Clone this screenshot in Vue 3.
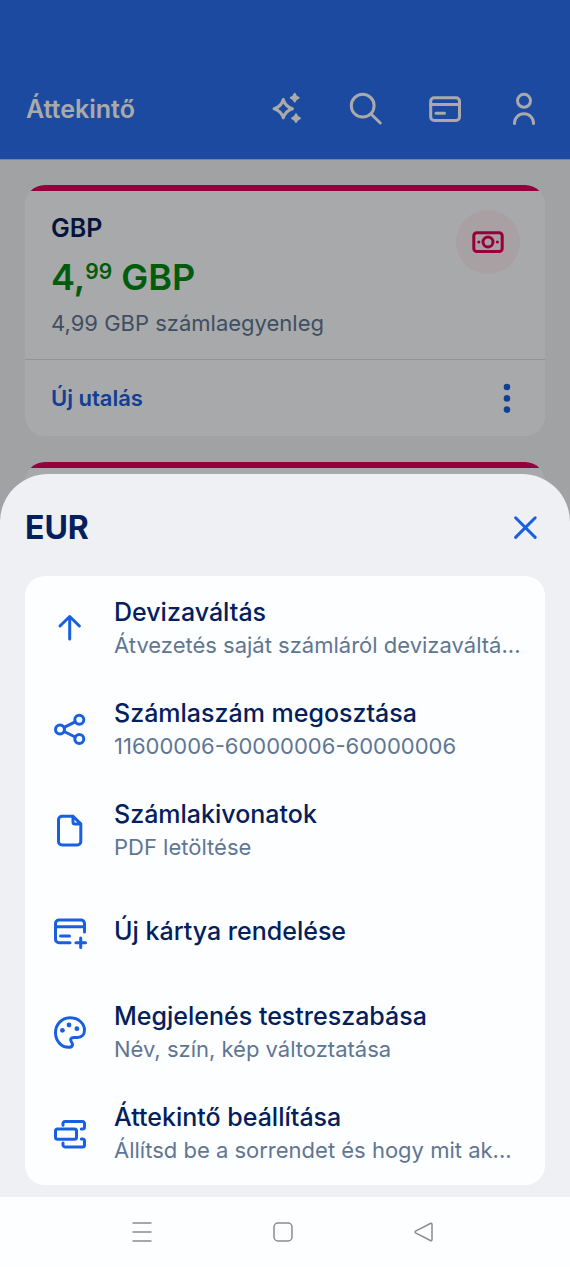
<script setup>
const menu = [
  { icon: 'arrow', title: 'Devizaváltás', note: 'Átvezetés saját számláról devizaváltá...' },
  { icon: 'share', title: 'Számlaszám megosztása', note: '11600006-60000006-60000006' },
  { icon: 'file', title: 'Számlakivonatok', note: 'PDF letöltése' },
  { icon: 'newcard', title: 'Új kártya rendelése', note: '' },
  { icon: 'palette', title: 'Megjelenés testreszabása', note: 'Név, szín, kép változtatása' },
  { icon: 'order', title: 'Áttekintő beállítása', note: 'Állítsd be a sorrendet és hogy mit ak...' },
]
</script>

<template>
  <div class="screen">
    <div class="overview">
      <header class="topbar">
        <h1>Áttekintő</h1>
        <button class="icon-btn" aria-label="Újdonságok">
          <svg class="icon" viewBox="0 0 40 40">
            <path d="M16.3 10.5C17.8 15.6 20.3 18.2 25.5 19.7C20.3 21.2 17.8 23.8 16.3 28.9C14.8 23.8 12.3 21.2 7.1 19.7C12.3 18.2 14.8 15.6 16.3 10.5Z" />
            <path class="solid" d="M27.7 4.8C28.3 7 29.4 8.1 31.6 8.7C29.4 9.3 28.3 10.4 27.7 12.6C27.1 10.4 26 9.3 23.8 8.7C26 8.1 27.1 7 27.7 4.8ZM29 25.3C29.6 27.5 30.7 28.6 32.9 29.2C30.7 29.8 29.6 30.9 29 33.1C28.4 30.9 27.3 29.8 25.1 29.2C27.3 28.6 28.4 27.5 29 25.3Z" />
          </svg>
        </button>
        <button class="icon-btn" aria-label="Keresés">
          <svg class="icon" viewBox="0 0 40 40"><circle cx="16.7" cy="16.7" r="11.4" /><path d="M25 25L34.3 34" /></svg>
        </button>
        <button class="icon-btn" aria-label="Kártyák">
          <svg class="icon" viewBox="0 0 40 40"><rect x="5.7" y="8.7" width="28.8" height="22.8" rx="3.5" /><path d="M5.5 15.4H34.5M11 24.3H19.5" /></svg>
        </button>
        <button class="icon-btn" aria-label="Profil">
          <svg class="icon" viewBox="0 0 40 40"><circle cx="20" cy="11.8" r="6.5" /><path d="M10.5 34.5V34.2A9.5 9.5 0 0 1 29.5 34.2V34.5" /></svg>
        </button>
      </header>

      <main class="accounts">
        <section class="account">
          <div class="account-body">
            <div>
              <h2>GBP</h2>
              <p class="amount">4,<span class="cents">99</span> GBP</p>
              <p class="balance">4,99 GBP számlaegyenleg</p>
            </div>
            <div class="badge">
              <svg class="icon" viewBox="0 0 40 40">
                <rect x="5.8" y="10.7" width="28.4" height="18.8" rx="3" /><circle cx="20" cy="20" r="5" />
                <circle class="dot" cx="10.8" cy="20" r="1.6" /><circle class="dot" cx="29.4" cy="20" r="1.6" />
              </svg>
            </div>
          </div>
          <div class="account-foot">
            <a href="#utalas">Új utalás</a>
            <button class="more" aria-label="További műveletek">
              <svg class="icon" viewBox="0 0 40 40">
                <circle class="dot" cx="20" cy="9" r="3.3" /><circle class="dot" cx="20" cy="20.4" r="3.3" /><circle class="dot" cx="20" cy="31.6" r="3.3" />
              </svg>
            </button>
          </div>
        </section>
        <section class="account next"></section>
      </main>
    </div>

    <div class="scrim"></div>

    <div class="sheet" role="dialog" aria-labelledby="sheet-title">
      <div class="sheet-head">
        <h2 id="sheet-title">EUR</h2>
        <button class="icon-btn" aria-label="Bezárás">
          <svg class="icon" viewBox="0 0 40 40"><path d="M10.6 9.8L30.2 29.4M30.2 9.8L10.6 29.4" /></svg>
        </button>
      </div>
      <ul class="menu">
        <li v-for="item in menu" :key="item.title">
          <button class="row">
            <svg class="icon" viewBox="0 0 40 40" aria-hidden="true">
              <path v-if="item.icon === 'arrow'" d="M19.7 30V7.5M10 17L19.7 7.5L29.4 17" />
              <template v-else-if="item.icon === 'share'">
                <circle cx="10" cy="19.5" r="4.5" /><circle cx="29.3" cy="9.8" r="4.5" /><circle cx="29.3" cy="29" r="4.5" />
                <path d="M14.1 17.4L25.2 11.9M14.1 21.5L25.2 27" />
              </template>
              <path v-else-if="item.icon === 'file'" d="M23 5.2H12A3.5 3.5 0 0 0 8.5 8.7V30.5A3.5 3.5 0 0 0 12 34H27.3A3.5 3.5 0 0 0 30.8 30.5V12.9L23 5.2V10.9A2 2 0 0 0 25 12.9H30.8" />
              <path v-else-if="item.icon === 'newcard'" d="M20 30.7H9A3.5 3.5 0 0 1 5.5 27.2V11.5A3.5 3.5 0 0 1 9 8H31A3.5 3.5 0 0 1 34.5 11.5V20M5.5 14.7H34.5M10.5 24H19.5M30.7 25.9V35.5M25.9 30.7H35.5" />
              <template v-else-if="item.icon === 'palette'">
                <path d="M20 4.8C28.5 4.8 34.5 10.5 34.5 17.3C34.5 21.6 31.6 24.5 27.5 24.5H23.8C20.8 24.5 19.9 26.6 21.3 28.6C23.6 31.7 22.4 34.3 18.8 34.3C11 34.3 5.5 27.6 5.5 19.5C5.5 11.3 11.8 4.8 20 4.8Z" />
                <circle class="dot" cx="12.4" cy="17.3" r="2.4" /><circle class="dot" cx="19" cy="12" r="2.4" /><circle class="dot" cx="26.9" cy="15.7" r="2.4" />
              </template>
              <path v-else d="M7.5 14.9H24.5A2 2 0 0 1 26.5 16.9V23.2A2 2 0 0 1 24.5 25.2H7.5A2 2 0 0 1 5.5 23.2V16.9A2 2 0 0 1 7.5 14.9ZM13 11.2V9.4A2 2 0 0 1 15 7.4H32.5A2 2 0 0 1 34.5 9.4V13.1A2 2 0 0 1 32.5 15.1H31.3M13 29V30.9A2 2 0 0 0 15 32.9H32.5A2 2 0 0 0 34.5 30.9V26.9A2 2 0 0 0 32.5 24.9H31.3" />
            </svg>
            <span class="texts">
              <span class="title">{{ item.title }}</span>
              <span v-if="item.note" class="note">{{ item.note }}</span>
            </span>
          </button>
        </li>
      </ul>
    </div>

    <nav class="system">
      <button aria-label="Legutóbbiak"><svg viewBox="0 0 24 24"><path d="M3 3H21M3 12H21M3 21H21" /></svg></button>
      <button aria-label="Kezdőlap"><svg viewBox="0 0 24 24"><rect x="3" y="3" width="18" height="18" rx="4" /></svg></button>
      <button aria-label="Vissza"><svg viewBox="0 0 24 24"><path d="M4 10.8L18.4 3.5Q20 2.8 20 4.5V19.5Q20 21.2 18.4 20.5L4 13.2Q2.2 12 4 10.8Z" /></svg></button>
    </nav>
  </div>
</template>

<style>
body {
  margin: 0;
}
</style>

<style scoped>
.screen {
  position: relative;
  display: flex;
  flex-direction: column;
  justify-content: flex-end;
  min-height: 100vh;
  overflow: hidden;
  box-sizing: border-box;
  background: #f1f3f7;
  color: #04205c;
  font-family: Inter, "Noto Sans", sans-serif;
}
h1, h2, p, ul {
  margin: 0;
  padding: 0;
}
button {
  display: block;
  margin: 0;
  padding: 0;
  border: 0;
  background: none;
  color: inherit;
  font: inherit;
  text-align: left;
  cursor: pointer;
}
svg {
  display: block;
  fill: none;
  stroke: currentColor;
  stroke-linecap: round;
  stroke-linejoin: round;
}
.icon {
  width: 40px;
  height: 40px;
  flex: none;
  stroke-width: 3;
}
.solid {
  fill: currentColor;
  stroke-width: 2;
}
.dot {
  fill: currentColor;
  stroke: none;
}
.overview, .scrim {
  position: absolute;
  inset: 0;
}
.scrim {
  background: rgba(0, 0, 0, 0.333);
}
.topbar {
  display: flex;
  align-items: center;
  gap: 39px;
  padding: 58px 26px 0;
  height: 101px;
  border-bottom: 1px solid #b9c6e4;
  background: #2a70f0;
  color: #fff;
}
.topbar h1 {
  flex: 1;
  font-size: 25px;
  font-weight: 600;
}
.accounts {
  display: grid;
  gap: 26px;
  padding: 25px;
}
.account {
  overflow: hidden;
  border-radius: 20px;
  background: #fdfeff;
}
.account::before {
  content: "";
  display: block;
  height: 6px;
  background: #de005a;
}
.next {
  height: 251px;
}
.account-body {
  display: flex;
  justify-content: space-between;
  padding: 19px 25px 20px 26px;
  border-bottom: 1px solid #dcdfe4;
}
.account h2 {
  font-size: 25px;
  line-height: 36px;
  font-weight: 600;
}
.amount {
  color: #008a14;
  font-size: 36px;
  line-height: 62px;
  font-weight: 600;
}
.cents {
  display: inline-block;
  font-size: 21px;
  line-height: 22px;
  vertical-align: 11px;
}
.balance {
  color: #5f7693;
  font-size: 22px;
  line-height: 31px;
}
.badge {
  display: grid;
  place-items: center;
  width: 64px;
  height: 64px;
  border-radius: 50%;
  background: #fcf1f5;
  color: #de005a;
}
.account-foot {
  display: flex;
  align-items: center;
  justify-content: space-between;
  padding: 0 18px 0 26px;
  height: 76px;
  color: #1860e0;
}
.account-foot a {
  color: inherit;
  font-size: 22px;
  font-weight: 600;
  text-decoration: none;
}
.sheet {
  position: relative;
  padding: 0 25px 12px;
  border-radius: 48px 48px 0 0;
  background: #eef0f4;
}
.sheet-head {
  display: flex;
  align-items: center;
  justify-content: space-between;
  padding-top: 5px;
  height: 97px;
}
.sheet-head h2 {
  font-size: 32px;
  font-weight: 700;
}
.sheet-head .icon {
  color: #1860e0;
}
.menu {
  padding: 2px 0 1px;
  border-radius: 20px;
  background: #fdfeff;
  list-style: none;
}
.row {
  display: flex;
  align-items: center;
  gap: 24px;
  width: 100%;
  height: 101px;
  padding: 0 16px 0 25px;
}
.row .icon {
  color: #1860e0;
}
.texts {
  display: flex;
  flex-direction: column;
  flex: 1;
  min-width: 0;
}
.title, .note {
  overflow: hidden;
  line-height: 33px;
  text-overflow: ellipsis;
  white-space: nowrap;
}
.title {
  font-size: 25px;
  font-weight: 500;
}
.note {
  color: #5f7693;
  font-size: 22px;
}
.system {
  position: relative;
  display: grid;
  grid-template-columns: repeat(3, 1fr);
  place-items: center;
  height: 70px;
  padding: 0 76px 0 71px;
  background: #fdfeff;
  color: #8b8c8e;
}
.system svg {
  width: 24px;
  height: 24px;
  stroke-width: 1.5;
}
</style>
